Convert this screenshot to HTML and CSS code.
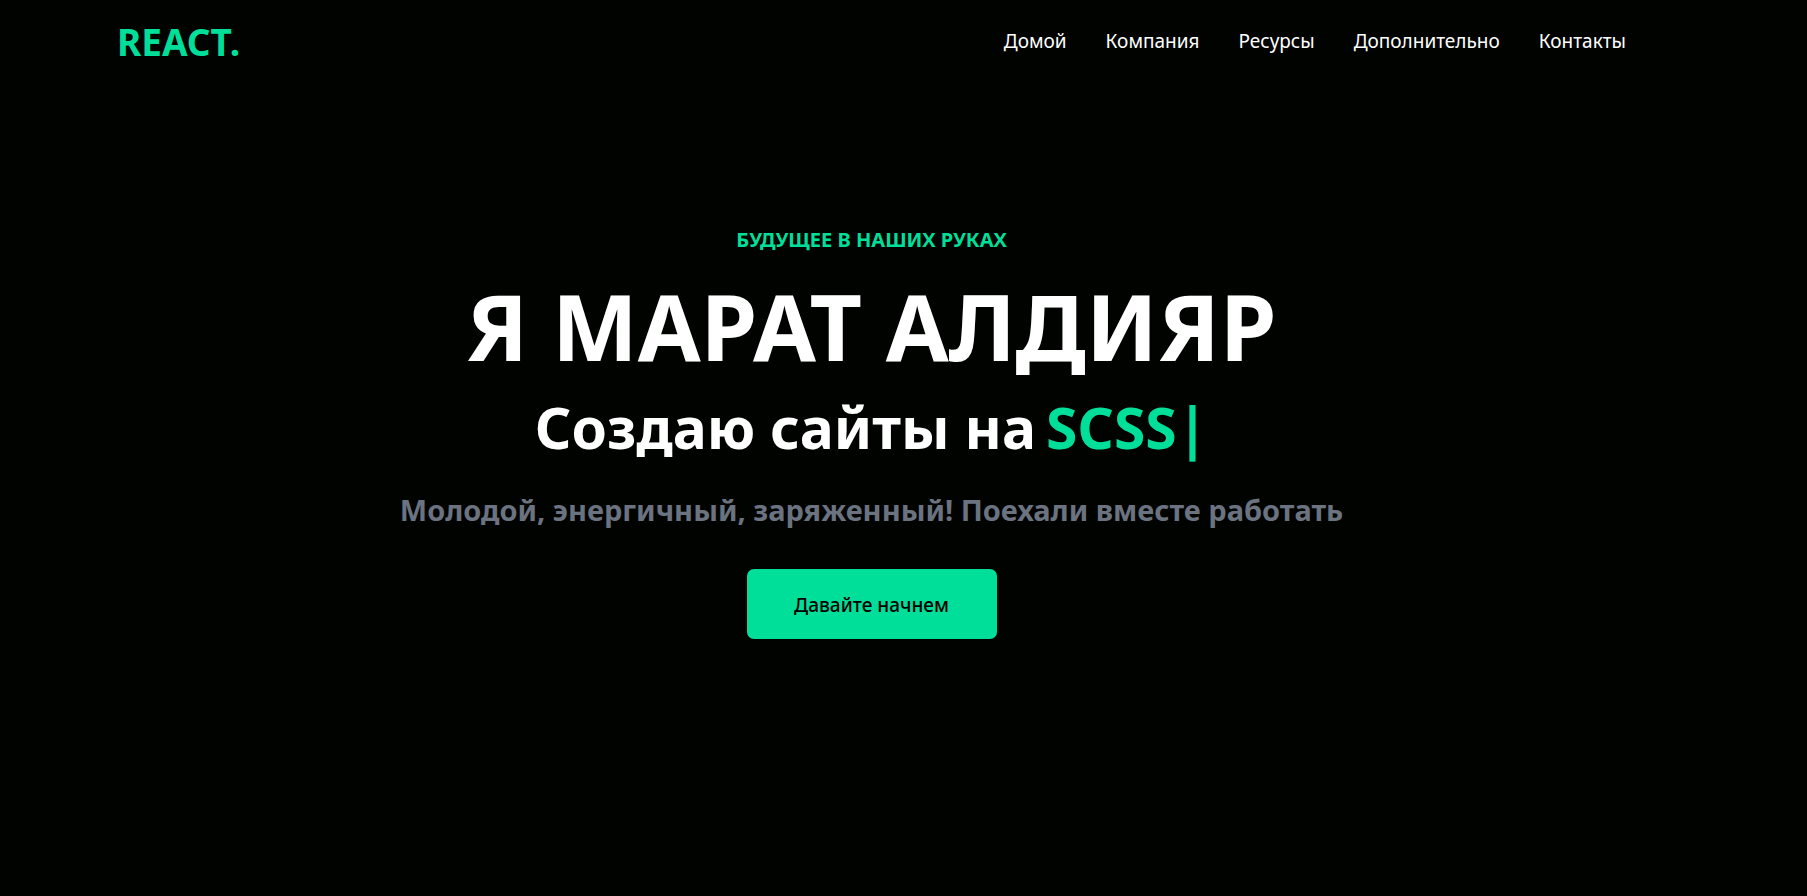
FILE: index.html
```html
<!DOCTYPE html>
<html lang="ru">
<head>
<meta charset="utf-8">
<title>REACT.</title>
<link rel="stylesheet" href="styles.css">
</head>
<body>
<div class="container">
  <header class="header">
    <h2 class="logo">REACT.</h2>
    <nav aria-label="Меню">
      <ul class="menu">
        <li><a href="#home">Домой</a></li>
        <li><a href="#company">Компания</a></li>
        <li><a href="#resources">Ресурсы</a></li>
        <li><a href="#about">Дополнительно</a></li>
        <li><a href="#contact">Контакты</a></li>
      </ul>
    </nav>
  </header>
  <main class="hero">
    <p class="tagline">БУДУЩЕЕ В НАШИХ РУКАХ</p>
    <h1 class="title">Я МАРАТ АЛДИЯР</h1>
    <p class="subtitle"><span>Создаю сайты на</span><span class="typed">SCSS|</span></p>
    <p class="lead">Молодой, энергичный, заряженный! Поехали вместе работать</p>
    <button class="cta" type="button">Давайте начнем</button>
  </main>
</div>
</body>
</html>
```
FILE: styles.css
```css
* {
  box-sizing: border-box;
  margin: 0;
  padding: 0;
}

body {
  background: #000300;
  color: #fff;
  font-family: "Noto Sans", "Open Sans", sans-serif;
}

.container {
  padding-right: 64px;
}

.header {
  display: flex;
  justify-content: space-between;
  align-items: flex-start;
  height: 86px;
  padding: 22px 117px 0;
}

.logo {
  color: #00df9a;
  font-size: 37px;
  line-height: 40px;
  font-weight: 700;
}

.menu {
  display: flex;
  gap: 39px;
  font-size: 19px;
  line-height: 38px;
  list-style: none;
}

.menu a {
  color: #fff;
  text-decoration: none;
}

.hero {
  display: flex;
  flex-direction: column;
  align-items: center;
  padding-top: 138px;
  text-align: center;
}

.tagline {
  color: #00df9a;
  font-size: 20px;
  line-height: 32px;
  font-weight: 700;
}

.title {
  margin-top: 18px;
  font-size: 91px;
  line-height: 104px;
  font-weight: 700;
}

.subtitle {
  display: flex;
  gap: 10px;
  margin-top: 13px;
  font-size: 57px;
  line-height: 72px;
  font-weight: 700;
}

.typed {
  color: #00df9a;
}

.lead {
  margin-top: 27px;
  color: #6b7280;
  font-size: 29px;
  line-height: 40px;
  font-weight: 700;
}

.cta {
  width: 250px;
  height: 70px;
  margin-top: 39px;
  padding-top: 2px;
  border: 0;
  border-radius: 7px;
  background: #00df9a;
  color: #000;
  font: 500 19px "Noto Sans", "Open Sans", sans-serif;
}
```
